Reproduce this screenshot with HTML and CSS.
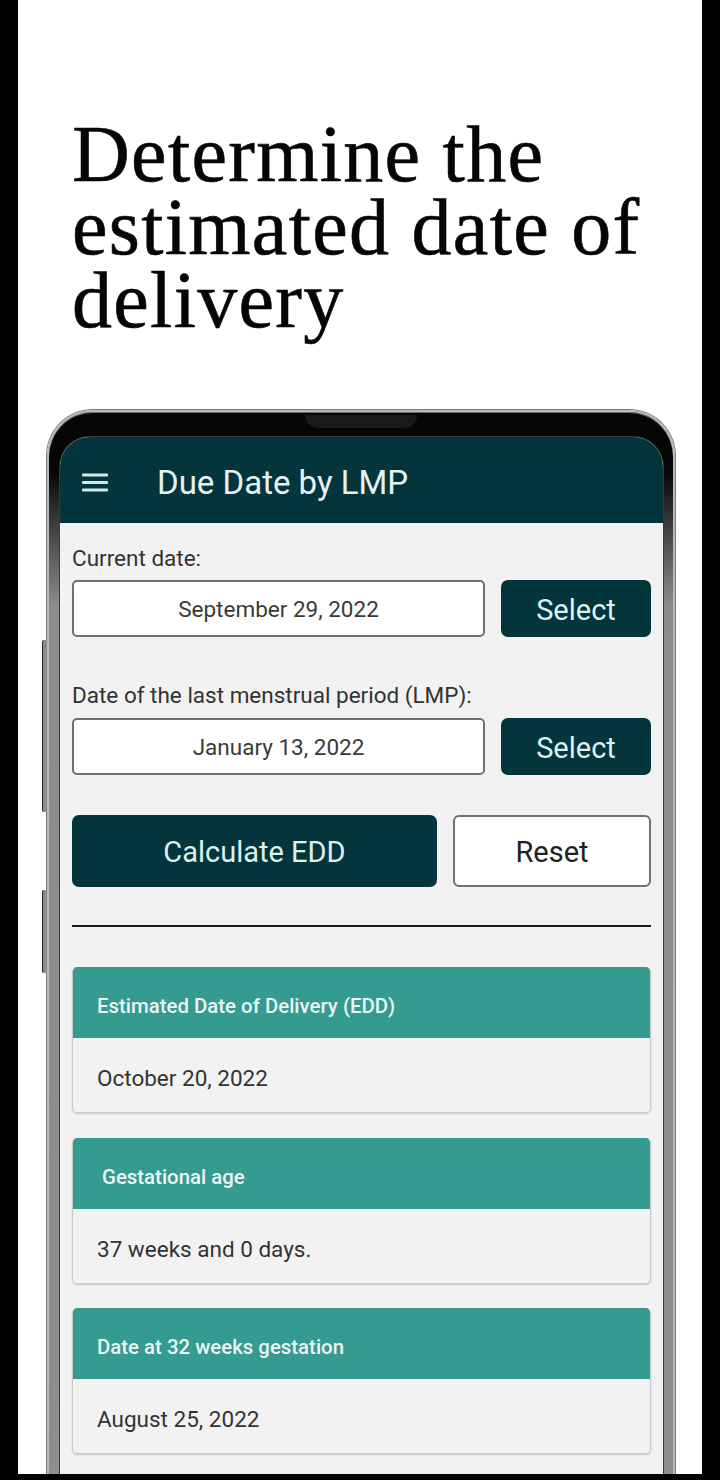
FILE: index.html
```html
<!DOCTYPE html>
<html lang="en">
<head>
<meta charset="utf-8">
<title>Due Date by LMP</title>
<link rel="stylesheet" href="styles.css">
</head>
<body>
<div class="page">
  <h1 class="headline">Determine the estimated date of delivery</h1>
  <div class="phone">
    <span class="side-btn side-btn--a"></span>
    <span class="side-btn side-btn--b"></span>
    <span class="notch"></span>
    <div class="screen">
      <header class="appbar">
        <svg class="menu" width="26" height="19" viewBox="0 0 26 19" aria-hidden="true">
          <rect x="0" y="0.5" width="26" height="3" rx="1" fill="#d3ebe8"/>
          <rect x="0" y="8" width="26" height="3" rx="1" fill="#d3ebe8"/>
          <rect x="0" y="15.5" width="26" height="3" rx="1" fill="#d3ebe8"/>
        </svg>
        <span class="appbar-title">Due Date by LMP</span>
      </header>
      <main class="content">
        <div class="field-label">Current date:</div>
        <div class="field-row">
          <div class="date-box">September 29, 2022</div>
          <button class="btn btn--dark">Select</button>
        </div>
        <div class="field-label field-label--second">Date of the last menstrual period (LMP):</div>
        <div class="field-row">
          <div class="date-box">January 13, 2022</div>
          <button class="btn btn--dark">Select</button>
        </div>
        <div class="action-row">
          <button class="btn btn--dark btn--big">Calculate EDD</button>
          <button class="btn btn--light btn--big">Reset</button>
        </div>
        <div class="divider"></div>
        <section class="card card--first">
          <div class="card-head">Estimated Date of Delivery (EDD)</div>
          <div class="card-body">October 20, 2022</div>
        </section>
        <section class="card card--second">
          <div class="card-head card-head--indent">Gestational age</div>
          <div class="card-body">37 weeks and 0 days.</div>
        </section>
        <section class="card card--third">
          <div class="card-head">Date at 32 weeks gestation</div>
          <div class="card-body">August 25, 2022</div>
        </section>
      </main>
    </div>
  </div>
</div>
</body>
</html>
```
FILE: styles.css
```css
html, body {
  margin: 0;
  padding: 0;
}
body {
  background: #000;
  width: 720px;
  height: 1480px;
  overflow: hidden;
}
.page {
  margin: 0 18px;
  height: 1474px;
  background: #fff;
  overflow: hidden;
}
.headline {
  margin: 0;
  padding: 118px 0 0 54px;
  max-width: 600px;
  font-family: "Liberation Serif", "Times New Roman", serif;
  font-weight: 400;
  font-size: 80px;
  line-height: 73px;
  letter-spacing: 1.3px;
  color: #050505;
  -webkit-text-stroke: 0.6px #050505;
}
.phone {
  position: relative;
  box-sizing: border-box;
  margin: 73px 0 0 29px;
  width: 628px;
  height: 1120px;
  padding: 25px 10px 0 11px;
  border: 2px solid #b9b9b9;
  border-bottom: none;
  border-radius: 46px 46px 0 0;
  background: linear-gradient(to bottom, #060606 0, #060606 60px, #4a4a4a 125px, #8d8d8d 195px, #8f8f8f 100%);
  box-shadow: inset 0 1px 0 #6d6d6d, 0 0 0 1px #7a7a7a;
}
.side-btn {
  position: absolute;
  left: -7px;
  width: 4px;
  background: #8a8a8a;
  border-left: 1px solid #2a2a2a;
  border-radius: 2px 0 0 2px;
}
.side-btn--a {
  top: 228px;
  height: 172px;
}
.side-btn--b {
  top: 478px;
  height: 83px;
}
.notch {
  position: absolute;
  top: 3px;
  left: 256px;
  width: 112px;
  height: 13px;
  background: #1a1a1a;
  border-radius: 0 0 14px 14px;
}
.screen {
  height: 100%;
  background: #f2f2f2;
  border-radius: 30px 30px 0 0;
  overflow: hidden;
  box-shadow: 0 0 0 1px #3a3a3a;
  font-family: Roboto, "Noto Sans", sans-serif;
}
.appbar {
  box-sizing: border-box;
  height: 86px;
  padding: 4px 0 0 22px;
  display: flex;
  align-items: center;
  background: #05353c;
}
.menu {
  flex: none;
  margin-right: 49px;
}
.appbar-title {
  font-size: 33px;
  color: #e4f3f1;
  font-weight: 400;
}
.content {
  padding: 20px 12px 0 12px;
}
.field-label {
  font-size: 22.5px;
  line-height: 30px;
  color: #333;
  margin-bottom: 7px;
}
.field-label--second {
  margin-top: 43px;
  margin-bottom: 8px;
}
.field-row {
  display: grid;
  grid-template-columns: 1fr 150px;
  column-gap: 16px;
  height: 57px;
}
.date-box {
  box-sizing: border-box;
  display: flex;
  align-items: center;
  justify-content: center;
  background: #fff;
  border: 2px solid #707070;
  border-radius: 5px;
  font-size: 22.5px;
  color: #3a3a3a;
  padding-top: 1px;
}
.btn {
  border: none;
  margin: 0;
  padding: 2px 0 0;
  font-family: Roboto, "Noto Sans", sans-serif;
  font-size: 29px;
  cursor: pointer;
}
.btn--dark {
  background: #05353c;
  color: #dcf1ee;
  border-radius: 7px;
}
.btn--light {
  box-sizing: border-box;
  background: #fff;
  color: #222;
  border: 2px solid #707070;
  border-radius: 6px;
}
.action-row {
  display: grid;
  grid-template-columns: 1fr 198px;
  column-gap: 16px;
  height: 72px;
  margin-top: 40px;
}
.divider {
  margin-top: 38px;
  height: 2px;
  background: #1a1a1a;
}
.card {
  border: 1px solid #c9c9c9;
  border-top: none;
  border-radius: 5px;
  overflow: hidden;
  box-shadow: 0 1px 2px rgba(0, 0, 0, 0.18);
}
.card--first {
  margin-top: 40px;
}
.card--second {
  margin-top: 25px;
}
.card--third {
  margin-top: 24px;
}
.card-head {
  box-sizing: border-box;
  height: 71px;
  padding: 7px 0 0 24px;
  display: flex;
  align-items: center;
  background: #359a8f;
  color: #eaf7f5;
  font-size: 20.4px;
  font-weight: 500;
}
.card-head--indent {
  padding-left: 29px;
}
.card-body {
  box-sizing: border-box;
  height: 74px;
  padding: 5px 0 0 24px;
  display: flex;
  align-items: center;
  font-size: 22.5px;
  color: #333;
}
```
